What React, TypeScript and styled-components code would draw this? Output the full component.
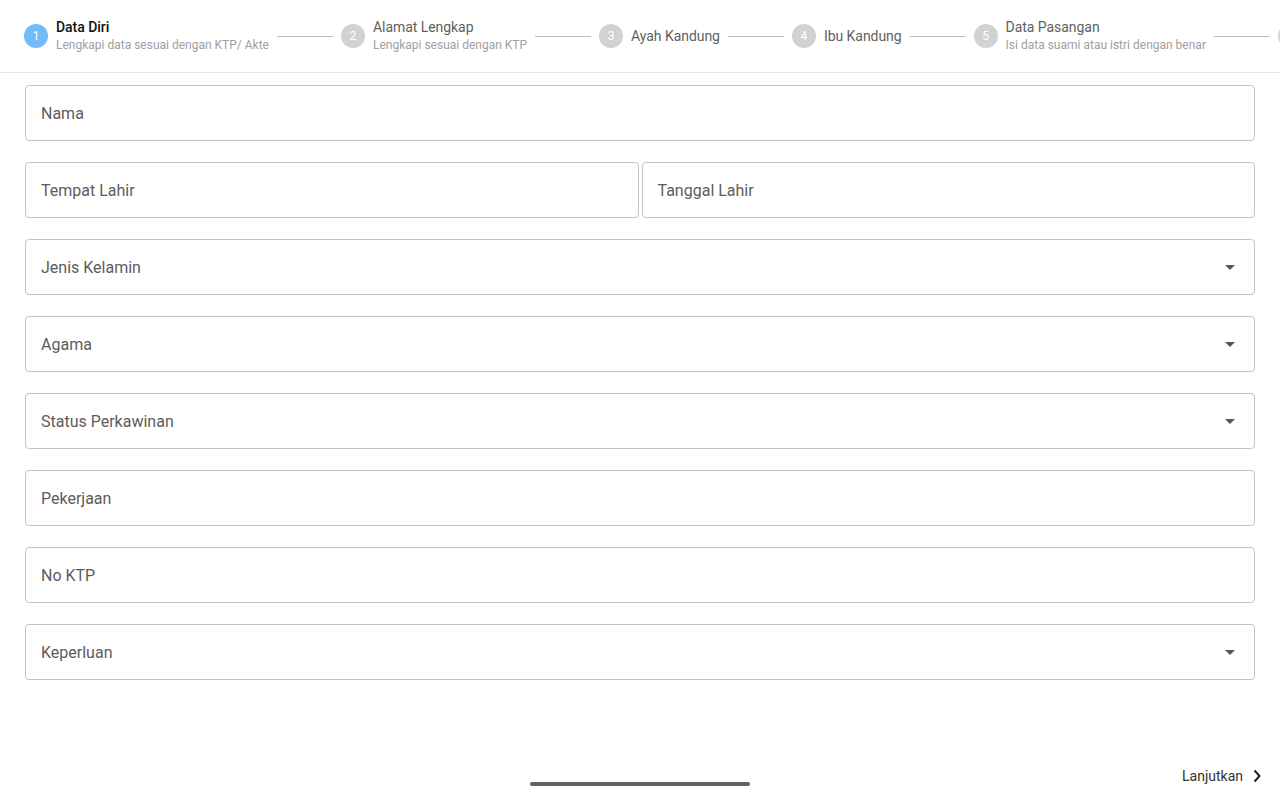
import styled, { createGlobalStyle } from "styled-components";

const GlobalStyle = createGlobalStyle`
  html, body {
    margin: 0;
    padding: 0;
    background: #ffffff;
    font-family: Roboto, "Liberation Sans", sans-serif;
  }
  * { box-sizing: border-box; }
`;

const steps = [
  { title: "Data Diri", sub: "Lengkapi data sesuai dengan KTP/ Akte" },
  { title: "Alamat Lengkap", sub: "Lengkapi sesuai dengan KTP" },
  { title: "Ayah Kandung" },
  { title: "Ibu Kandung" },
  { title: "Data Pasangan", sub: "Isi data suami atau istri dengan benar" },
  { title: "" },
];

export default function App() {
  return (
    <Page>
      <GlobalStyle />
      <StepperBar>
        {steps.map((s, i) => (
          <StepGroup key={i}>
            {i > 0 && <Connector />}
            <Step>
              {/* the last step is scrolled past the edge, only its circle shows */}
              <StepCircle $active={i === 0}>{s.title ? i + 1 : ""}</StepCircle>
              {s.title && (
                <StepText>
                  <StepTitle $active={i === 0}>{s.title}</StepTitle>
                  {s.sub && <StepSub>{s.sub}</StepSub>}
                </StepText>
              )}
            </Step>
          </StepGroup>
        ))}
      </StepperBar>

      <Form>
        <Field>
          <Label>Nama</Label>
        </Field>
        <Row>
          <Field $grow>
            <Label>Tempat Lahir</Label>
          </Field>
          <Field $grow>
            <Label>Tanggal Lahir</Label>
          </Field>
        </Row>
        <Field>
          <Label>Jenis Kelamin</Label>
          <Arrow />
        </Field>
        <Field>
          <Label>Agama</Label>
          <Arrow />
        </Field>
        <Field>
          <Label>Status Perkawinan</Label>
          <Arrow />
        </Field>
        <Field>
          <Label>Pekerjaan</Label>
        </Field>
        <Field>
          <Label>No KTP</Label>
        </Field>
        <Field>
          <Label>Keperluan</Label>
          <Arrow />
        </Field>
      </Form>

      <Footer>
        <NextButton>
          Lanjutkan
          <svg width="10" height="14" viewBox="0 0 10 14">
            <path d="M2.5 1.5 L7.5 7 L2.5 12.5" fill="none" stroke="#222" strokeWidth="2" />
          </svg>
        </NextButton>
        <HomeBar />
      </Footer>
    </Page>
  );
}

const Page = styled.div`
  position: relative;
  height: 100vh;
  display: flex;
  flex-direction: column;
  overflow: hidden;
`;

const StepperBar = styled.div`
  height: 73px;
  flex: none;
  display: flex;
  align-items: center;
  padding-left: 24px;
  border-bottom: 1px solid #e6e6e6;
  overflow: hidden;
  white-space: nowrap;
`;

const StepGroup = styled.div`
  display: flex;
  align-items: center;
  flex: none;
`;

const Connector = styled.div`
  width: 56px;
  height: 1px;
  background: #bdbdbd;
  margin: 0 8px;
`;

const Step = styled.div`
  display: flex;
  align-items: center;
  gap: 8px;
`;

const StepCircle = styled.div<{ $active: boolean }>`
  width: 24px;
  height: 24px;
  border-radius: 50%;
  background: ${(p) => (p.$active ? "#73baf7" : "#d2d2d2")};
  color: #ffffff;
  font-size: 12px;
  display: flex;
  align-items: center;
  justify-content: center;
  flex: none;
`;

const StepText = styled.div`
  display: flex;
  flex-direction: column;
  gap: 1px;
`;

const StepTitle = styled.span<{ $active: boolean }>`
  font-size: 14px;
  line-height: 17px;
  letter-spacing: -0.05px;
  color: ${(p) => (p.$active ? "#111111" : "#5f5f5f")};
  font-weight: ${(p) => (p.$active ? 500 : 400)};
`;

const StepSub = styled.span`
  font-size: 12px;
  line-height: 16px;
  color: #a0a0a0;
`;

const Form = styled.div`
  display: flex;
  flex-direction: column;
  gap: 21px;
  padding: 12px 25px 0 25px;
`;

const Row = styled.div`
  display: flex;
  gap: 3px;
`;

const Field = styled.div<{ $grow?: boolean }>`
  position: relative;
  flex: ${(p) => (p.$grow ? "1 1 0" : "none")};
  height: 56px;
  border: 1px solid #c4c4c4;
  border-radius: 4px;
  display: flex;
  align-items: center;
  padding: 0 15px;
`;

const Label = styled.span`
  font-size: 16px;
  color: #5c5c5c;
`;

const Arrow = styled.span`
  position: absolute;
  right: 19px;
  top: 50%;
  margin-top: -2px;
  width: 0;
  height: 0;
  border-left: 5px solid transparent;
  border-right: 5px solid transparent;
  border-top: 5px solid #555555;
`;

const Footer = styled.div`
  margin-top: auto;
  height: 48px;
  display: flex;
  align-items: center;
  justify-content: flex-end;
  padding-right: 18px;
`;

const NextButton = styled.button`
  border: none;
  background: none;
  display: flex;
  align-items: center;
  gap: 9px;
  font-family: Roboto, "Liberation Sans", sans-serif;
  font-size: 14px;
  color: #333333;
  padding: 0;
  cursor: pointer;
`;

const HomeBar = styled.div`
  position: absolute;
  left: 530px;
  bottom: 14px;
  width: 220px;
  height: 4px;
  border-radius: 2px;
  background: #5f5f5f;
`;
